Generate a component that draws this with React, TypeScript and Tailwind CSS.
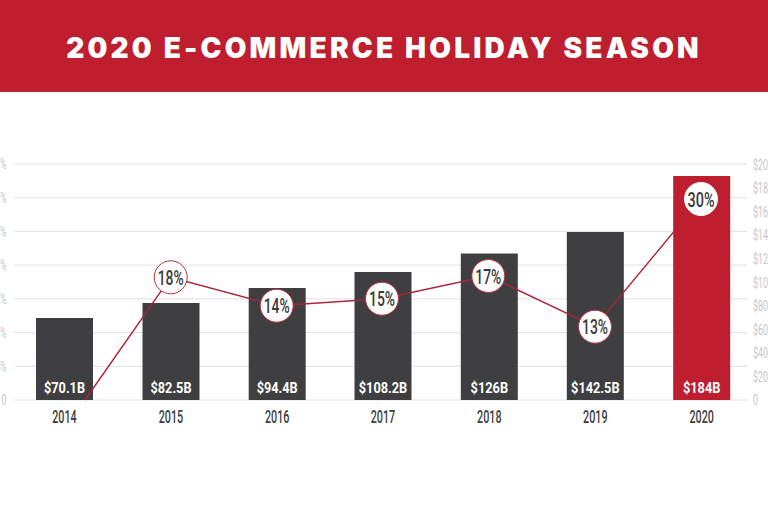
import React from 'react';

const FONT = 'Roboto, "DejaVu Sans", sans-serif';

const bars = [
  { year: '2014', label: '$70.1B', cx: 64.5, top: 318 },
  { year: '2015', label: '$82.5B', cx: 171, top: 303 },
  { year: '2016', label: '$94.4B', cx: 277.2, top: 288 },
  { year: '2017', label: '$108.2B', cx: 383, top: 272 },
  { year: '2018', label: '$126B', cx: 489.3, top: 253.5 },
  { year: '2019', label: '$142.5B', cx: 595.3, top: 232 },
  { year: '2020', label: '$184B', cx: 701.7, top: 176, highlight: true },
];

const growth = [
  { x: 170.7, y: 277.3, t: '18%' },
  { x: 276.7, y: 305.7, t: '14%' },
  { x: 382, y: 298.7, t: '15%' },
  { x: 488.3, y: 276, t: '17%' },
  { x: 595, y: 326.7, t: '13%' },
  { x: 701, y: 199, t: '30%', onRed: true },
];

const gridY = [164, 197.7, 231.4, 265.1, 298.9, 332.6, 366.3, 400];
const leftLabels = ['35%', '30%', '25%', '20%', '15%', '10%', '5%', '0'];
const rightLabels = ['$200B', '$180B', '$160B', '$140B', '$120B', '$100B', '$80B', '$60B', '$40B', '$20B', '0'];

const labelWidth = (s: string) => s.split('').reduce((w, c) => w + (c === '.' ? 3.5 : 7.5), 0);

function Chart() {
  const linePoints = [{ x: 85, y: 400 }, ...growth].map((p) => `${p.x},${p.y}`).join(' ');
  return (
    <svg width="768" height="340" viewBox="0 92 768 340" className="block" style={{ fontFamily: FONT }}>
      {/* grid */}
      {gridY.map((y) => (
        <line key={y} x1="14" x2="747" y1={y} y2={y} stroke="#e2e2e2" strokeWidth="1" />
      ))}
      {/* left axis, runs off the page edge as in the original artwork */}
      {leftLabels.map((t, i) => (
        <text key={t} x="6.5" y={gridY[i] + 5.3} textAnchor="end" fontSize="15" fill="#c6c6c6"
          textLength={t.length * 5.2} lengthAdjust="spacingAndGlyphs">{t}</text>
      ))}
      {/* right axis */}
      {rightLabels.map((t, i) => (
        <text key={t} x="753" y={164.5 + i * 23.55 + 5.3} fontSize="15" fill="#c6c6c6"
          textLength={t.length * 5.1} lengthAdjust="spacingAndGlyphs">{t}</text>
      ))}
      {/* bars */}
      {bars.map((b) => (
        <g key={b.year}>
          <rect x={b.cx - 28.5} y={b.top} width="57" height={400 - b.top} fill={b.highlight ? '#bf1e2e' : '#3f3f41'} />
          <text x={b.cx} y="393" textAnchor="middle" fontSize="15.5" fontWeight="700" fill="#ffffff"
            textLength={labelWidth(b.label)} lengthAdjust="spacingAndGlyphs">{b.label}</text>
          <text x={b.cx} y="423" textAnchor="middle" fontSize="17.5" fontWeight="500" fill="#3d3d3f"
            textLength="24.5" lengthAdjust="spacingAndGlyphs">{b.year}</text>
        </g>
      ))}
      {/* growth line */}
      <polyline points={linePoints} fill="none" stroke="#a8263a" strokeWidth="1.4" />
      {growth.map((g) => (
        <g key={g.t}>
          <circle cx={g.x} cy={g.y} r="16.5" fill="#ffffff" stroke={g.onRed ? '#ffffff' : '#b5303f'} strokeWidth="1" />
          <text x={g.x} y={g.y + 7.5} textAnchor="middle" fontSize="20.5" fontWeight="500" fill="#3a3a3c"
            textLength={g.t === '30%' ? 27 : 26} lengthAdjust="spacingAndGlyphs">{g.t}</text>
        </g>
      ))}
      {/* legend */}
      <rect x="314" y="442" width="14" height="14" fill="#3f3f41" />
      <text x="334" y="454.8" fontSize="16.5" fill="#3a3a3c" textLength="33" lengthAdjust="spacingAndGlyphs">SPEND</text>
      <line x1="388" x2="405" y1="449" y2="449" stroke="#b8404f" strokeWidth="1.5" />
      <text x="409" y="454.8" fontSize="16.5" fill="#3a3a3c" textLength="44" lengthAdjust="spacingAndGlyphs">GROWTH</text>
    </svg>
  );
}

export default function App() {
  return (
    <div className="w-[768px] h-[512px] bg-white overflow-hidden">
      <div className="h-[92px] bg-[#be1e2d] flex items-center justify-center pt-[3px]">
        <h1 className="text-white text-[28px] font-black font-['Inter',sans-serif] tracking-[3.2px] leading-none">
          2020 E-COMMERCE HOLIDAY SEASON
        </h1>
      </div>
      <Chart />
    </div>
  );
}
